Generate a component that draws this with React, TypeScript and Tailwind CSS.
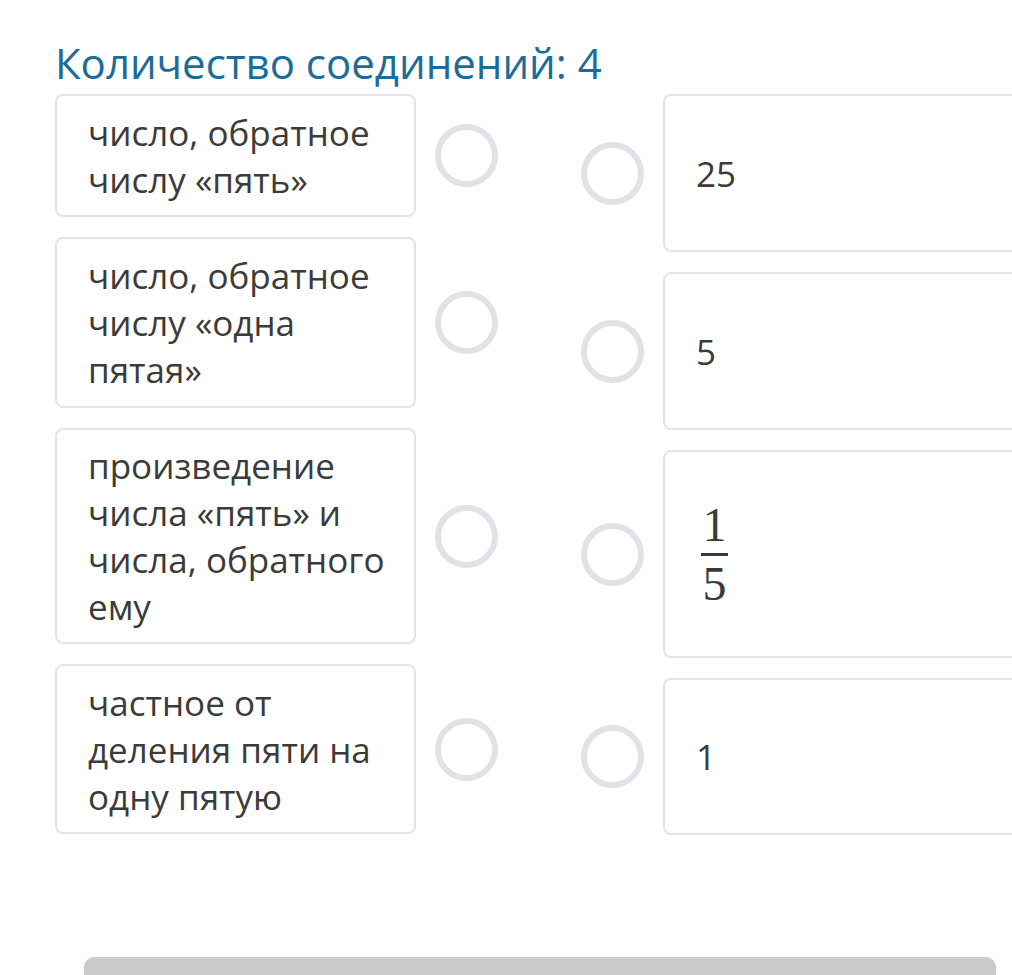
import React from "react";

const Circle = () => (
  <div className="w-[63px] h-[63px] shrink-0 rounded-full border-[6px] border-[#dfe3e8] bg-white" />
);

const leftItems: { lines: string[]; h: string }[] = [
  { lines: ["число, обратное", "числу «пять»"], h: "h-[123px]" },
  { lines: ["число, обратное", "числу «одна", "пятая»"], h: "h-[171px]" },
  { lines: ["произведение", "числа «пять» и", "числа, обратного", "ему"], h: "h-[216px]" },
  { lines: ["частное от", "деления пяти на", "одну пятую"], h: "h-[170px]" },
];

const Fraction = () => (
  <div
    className="flex flex-col items-center text-[48px] leading-[44px] text-[#3a3a3a]"
    style={{ fontFamily: '"Liberation Serif", "DejaVu Serif", serif' }}
  >
    <span>1</span>
    <span className="block w-[27px] h-[3px] bg-[#3a3a3a] my-[6px]" />
    <span>5</span>
  </div>
);

const rightCard =
  "w-[420px] border-2 border-[#e1e4e7] rounded-[8px] px-[31px] flex items-center text-[35px] leading-[47px] text-[#3b3b3b]";

export default function App() {
  return (
    <div
      className="w-[1012px] h-[975px] overflow-hidden bg-white relative flex flex-col"
      style={{ fontFamily: '"Open Sans", "Noto Sans", sans-serif' }}
    >
      <div className="pl-[55px] pt-[37px]">
        <h1 className="text-[42px] leading-[52px] text-[#1a6d9b] font-normal mb-[5px] whitespace-nowrap">
          Количество соединений: 4
        </h1>
        <div className="flex gap-[83px]">
          {/* left column */}
          <div className="flex flex-col gap-[20px]">
            {leftItems.map((it, i) => (
              <div key={i} className="flex items-center gap-[19px]">
                <div
                  className={`w-[361px] ${it.h} border-2 border-[#e1e4e7] rounded-[8px] px-[31px] flex flex-col justify-center text-[35px] leading-[47px] text-[#3b3b3b]`}
                >
                  {it.lines.map((l, j) => (
                    <div key={j} className="whitespace-nowrap">
                      {l}
                    </div>
                  ))}
                </div>
                <Circle />
              </div>
            ))}
          </div>
          {/* right column */}
          <div className="flex flex-col gap-[20px]">
            <div className="flex items-center gap-[19px]">
              <Circle />
              <div className={`${rightCard} h-[158px]`}>25</div>
            </div>
            <div className="flex items-center gap-[19px]">
              <Circle />
              <div className={`${rightCard} h-[158px]`}>5</div>
            </div>
            <div className="flex items-center gap-[19px]">
              <Circle />
              <div className="w-[420px] h-[208px] border-2 border-[#e1e4e7] rounded-[8px] pl-[36px] flex items-center">
                <Fraction />
              </div>
            </div>
            <div className="flex items-center gap-[19px]">
              <Circle />
              <div className={`${rightCard} h-[157px]`}>1</div>
            </div>
          </div>
        </div>
      </div>
      <div className="mt-auto ml-[84px] mr-[16px] h-[18px] bg-[#cbcbcb] rounded-t-[10px]" />
    </div>
  );
}
